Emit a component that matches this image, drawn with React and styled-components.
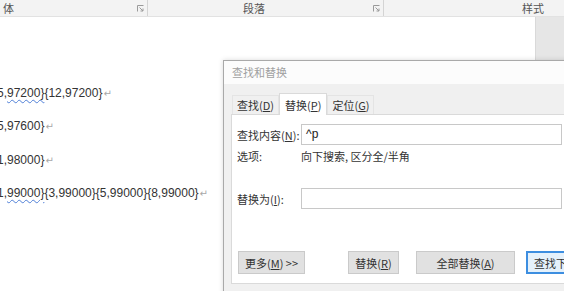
import React from 'react'
import styled, { createGlobalStyle } from 'styled-components'

const Global = createGlobalStyle`
  html, body { margin: 0; padding: 0; }
  body {
    width: 564px;
    height: 291px;
    overflow: hidden;
    background: #fff;
    font-family: "Liberation Sans", "Noto Sans CJK SC", sans-serif;
  }
`

const Launcher = () => (
  <svg width="7" height="7" viewBox="0 0 7 7">
    <path d="M0.5 6.5 V0.5 H6.5" fill="none" stroke="#9a9a9a" strokeWidth="1" />
    <path d="M2.5 2.5 L6 6 M6 3.5 V6 H3.5" fill="none" stroke="#9a9a9a" strokeWidth="1" />
  </svg>
)

const App = () => {
  return (
    <Page>
      <Global />
      <Ribbon>
        <Group $w={148} $sep>
          <GroupLabel>体</GroupLabel>
          <Spacer />
          <Launcher />
        </Group>
        <Group $w={236} $sep>
          <GroupLabel $pl={92}>段落</GroupLabel>
          <Spacer />
          <Launcher />
        </Group>
        <Group $w={180}>
          <Spacer />
          <GroupLabel $pr={17}>样式</GroupLabel>
        </Group>
      </Ribbon>

      <Main>
        <Doc>
          <Line>
            5,<Wavy>97200}</Wavy>{'{12,97200}'}<Mark>↵</Mark>
          </Line>
          <Line>
            5,97600}<Mark>↵</Mark>
          </Line>
          <Line>
            1,98000}<Mark>↵</Mark>
          </Line>
          <Line>
            1,<Wavy>99000}</Wavy>{'{3,99000}{5,99000}{8,99000}'}<Mark>↵</Mark>
          </Line>
        </Doc>
        <SidePane />
      </Main>

      <Dialog>
        <TitleBar>查找和替换</TitleBar>
        <DialogBody>
          <TabRow>
            <Tab>查找(<u>D</u>)</Tab>
            <Tab $active>替换(<u>P</u>)</Tab>
            <Tab>定位(<u>G</u>)</Tab>
          </TabRow>
          <Panel>
            <FieldRow>
              <Label>查找内容(<u>N</u>):</Label>
              <Field>^p</Field>
            </FieldRow>
            <OptionRow>
              <Label>选项:</Label>
              <OptionText>向下搜索, 区分全/半角</OptionText>
            </OptionRow>
            <FieldRow $mt={25}>
              <Label>替换为(<u>I</u>):</Label>
              <Field />
            </FieldRow>
            <ButtonRow>
              <Button $w={67} $ml={1}>更多(<u>M</u>) &gt;&gt;</Button>
              <Button $w={51} $ml={43}>替换(<u>R</u>)</Button>
              <Button $w={99} $ml={17}>全部替换(<u>A</u>)</Button>
              <Button $w={99} $ml={11} $default>查找下一处(<u>F</u>)</Button>
            </ButtonRow>
          </Panel>
        </DialogBody>
      </Dialog>
    </Page>
  )
}

export default App

const Page = styled.div`
  position: relative;
  width: 564px;
  height: 291px;
  overflow: hidden;
  display: flex;
  flex-direction: column;
`

const Ribbon = styled.div`
  height: 16px;
  flex-shrink: 0;
  background: #f3f3f3;
  border-bottom: 1px solid #e2e2e2;
  display: flex;
`

const Group = styled.div`
  width: ${p => p.$w}px;
  flex-shrink: 0;
  box-sizing: border-box;
  display: flex;
  align-items: center;
  padding: 0 3px;
  border-right: ${p => (p.$sep ? '1px solid #d4d4d4' : 'none')};
`

const GroupLabel = styled.span`
  font-family: "Noto Sans CJK SC", sans-serif;
  font-size: 11px;
  color: #555;
  line-height: 16px;
  padding-left: ${p => p.$pl || 0}px;
  padding-right: ${p => p.$pr || 0}px;
`

const Spacer = styled.div`
  flex: 1;
`

const Main = styled.div`
  flex: 1;
  display: flex;
`

const Doc = styled.div`
  flex: 1;
  padding-top: 60px;
  overflow: hidden;
`

const Line = styled.div`
  height: 33.3px;
  line-height: 33.3px;
  margin-left: -3px;
  font-size: 12px;
  color: #333;
  white-space: nowrap;
`

const Wavy = styled.span`
  text-decoration-line: underline;
  text-decoration-style: wavy;
  text-decoration-color: #4f7fd6;
  text-decoration-thickness: 1px;
  text-underline-offset: 2px;
`

const Mark = styled.span`
  font-family: "DejaVu Sans", sans-serif;
  font-size: 10px;
  color: #a8a8a8;
  margin-left: 1px;
`

const SidePane = styled.div`
  width: 28px;
  background: #e6e6e6;
  border-left: 1px solid #d9d9d9;
`

const Dialog = styled.div`
  position: absolute;
  left: 223px;
  top: 60px;
  width: 400px;
  height: 260px;
  background: #f0f0f0;
  border: 1px solid #a9a9a9;
  box-shadow: 0 0 5px rgba(0, 0, 0, 0.15);
  font-family: "Noto Sans CJK SC", sans-serif;
  font-size: 11px;
  color: #333;
`

const TitleBar = styled.div`
  height: 23px;
  line-height: 23px;
  background: #fcfcfc;
  padding-left: 8px;
  color: #a0a0a0;
  font-size: 11px;
`

const DialogBody = styled.div`
  padding-left: 7px;
`

const TabRow = styled.div`
  display: flex;
  align-items: flex-end;
  height: 30px;
  margin-left: 1px;
`

const Tab = styled.div`
  height: ${p => (p.$active ? 22 : 19)}px;
  line-height: ${p => (p.$active ? 22 : 19)}px;
  padding: 0 ${p => (p.$active ? 5 : 4)}px;
  background: ${p => (p.$active ? '#fff' : '#f0f0f0')};
  border: 1px solid ${p => (p.$active ? '#dadada' : '#e4e4e4')};
  border-bottom: none;
  margin-bottom: ${p => (p.$active ? -1 : 0)}px;
  position: relative;
  z-index: ${p => (p.$active ? 1 : 0)};
  box-sizing: border-box;
  white-space: nowrap;
`

const Panel = styled.div`
  width: 400px;
  background: #fff;
  border: 1px solid #dadada;
  padding: 9px 0 9px 5px;
  display: flex;
  flex-direction: column;
`

const FieldRow = styled.div`
  display: flex;
  align-items: center;
  height: 21px;
  margin-top: ${p => p.$mt || 0}px;
`

const Label = styled.div`
  width: 64px;
  flex-shrink: 0;
  white-space: nowrap;
`

const Field = styled.div`
  width: 261px;
  height: 21px;
  box-sizing: border-box;
  border: 1px solid #c8c8c8;
  padding-left: 4px;
  font-family: "Liberation Sans", sans-serif;
  font-size: 12px;
  line-height: 19px;
  color: #222;
`

const OptionRow = styled.div`
  display: flex;
  height: 14px;
  line-height: 14px;
  margin-top: 4px;
`

const OptionText = styled.div`
  white-space: nowrap;
`

const ButtonRow = styled.div`
  display: flex;
  margin-top: 42px;
`

const Button = styled.div`
  width: ${p => p.$w}px;
  height: 23px;
  margin-left: ${p => p.$ml}px;
  box-sizing: border-box;
  flex-shrink: 0;
  display: flex;
  align-items: center;
  justify-content: ${p => (p.$default ? 'flex-start' : 'center')};
  padding-left: ${p => (p.$default ? 6 : 0)}px;
  background: ${p => (p.$default ? '#e5f1fb' : '#e1e1e1')};
  border: ${p => (p.$default ? '2px solid #3d8ee0' : '1px solid #cacaca')};
  white-space: nowrap;
  overflow: hidden;
`
